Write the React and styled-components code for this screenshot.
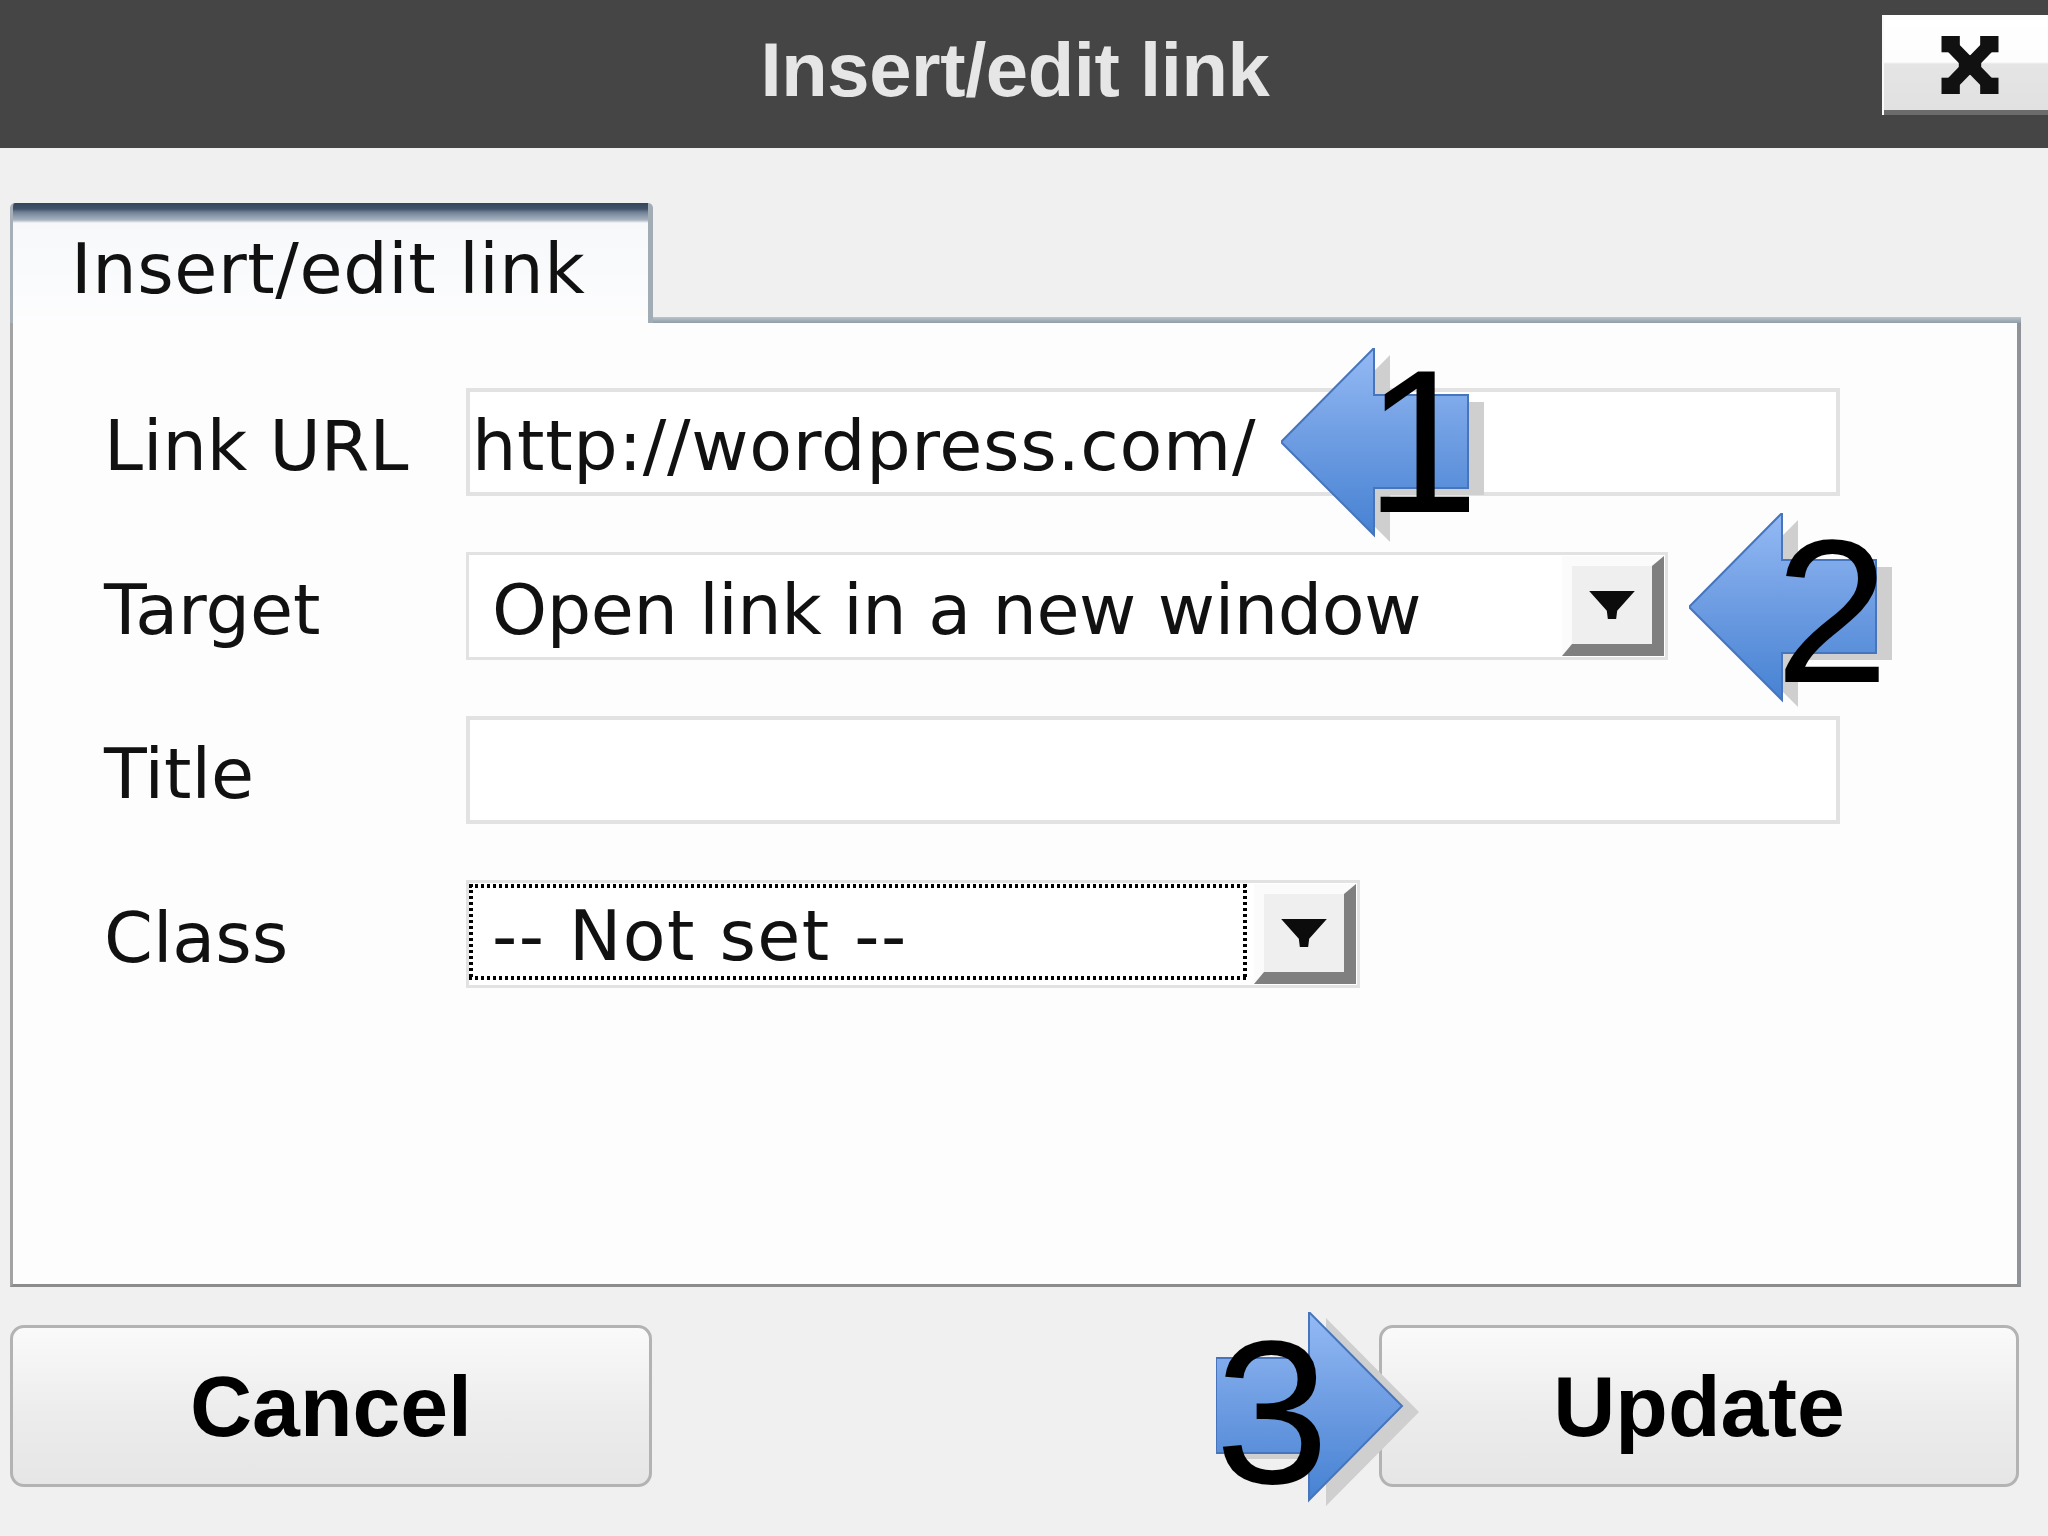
import React from 'react';
import styled, { createGlobalStyle } from 'styled-components';

const GlobalStyle = createGlobalStyle`
  html, body { margin: 0; padding: 0; background: #f0f0f0; }
  body { width: 2048px; height: 1536px; overflow: hidden; }
  *, *::before, *::after { box-sizing: border-box; }
`;

const Window = styled.div`
  position: relative;
  width: 2048px;
  height: 1536px;
  background: #f0f0f0;
  display: flex;
  flex-direction: column;
  font-family: "DejaVu Sans", Verdana, sans-serif;
  color: #111;
`;

const TitleBar = styled.header`
  flex: none;
  height: 148px;
  background: #464546;
  display: grid;
  grid-template-columns: 1fr auto 1fr;
  align-items: center;
`;

const TitleText = styled.h1`
  grid-column: 2;
  margin: 0;
  padding: 0 18px 9px 0;
  font-family: "Liberation Sans", Arial, sans-serif;
  font-weight: 700;
  font-size: 76px;
  line-height: 76px;
  color: #e6e6e6;
  letter-spacing: -0.4px;
`;

const CloseButton = styled.button`
  grid-column: 3;
  justify-self: end;
  align-self: start;
  margin-top: 15px;
  width: 166px;
  height: 100px;
  border: none;
  border-left: 2px solid #fafafa;
  padding: 0 0 0 57px;
  display: flex;
  align-items: center;
  background: linear-gradient(
    to bottom,
    #ffffff 0,
    #fdfdfd 47px,
    #e5e5e5 49px,
    #e1e1e1 95px,
    #6c6c6c 95px,
    #6c6c6c 100%
  );
`;

const Body = styled.main`
  flex: 1;
  display: flex;
  flex-direction: column;
  padding: 55px 27px 0 10px;
`;

const TabRow = styled.div`
  display: flex;
  height: 120px;
`;

const Tab = styled.div`
  width: 643px;
  border-left: 3px solid #a7b0b8;
  border-right: 5px solid #a2acb5;
  border-top-left-radius: 5px;
  border-top-right-radius: 5px;
  background: linear-gradient(
    to bottom,
    #34445a 0,
    #42526a 6px,
    #6d7e92 9px,
    #8c9aab 13px,
    #a7b3bf 17px,
    #f6f8fa 20px,
    #fdfdfe 100%
  );
  padding: 31px 0 0 58px;
  font-size: 70px;
  line-height: 70px;
  letter-spacing: 0.6px;
  white-space: nowrap;
`;

const TabFiller = styled.div`
  flex: 1;
  align-self: flex-end;
  height: 6px;
  background: linear-gradient(to bottom, #b9c4cb, #8f9da8);
`;

const Panel = styled.section`
  flex: none;
  height: 964px;
  background: #fdfdfd;
  border-left: 3px solid #a3a3a3;
  border-right: 4px solid #8f9397;
  border-bottom: 3px solid #8c8c8c;
  padding: 65px 0 0 91px;
  display: grid;
  grid-template-columns: 362px auto;
  grid-auto-rows: 108px;
  row-gap: 56px;
  align-items: center;
  align-content: start;
  justify-content: start;
`;

const FieldLabel = styled.label`
  font-size: 70px;
  line-height: 70px;
  padding-top: 8px;
  white-space: nowrap;
`;

const TextField = styled.div`
  width: ${(p) => p.$width}px;
  height: 108px;
  border: 4px solid #e2e2e2;
  background: #ffffff;
  display: flex;
  align-items: center;
  padding: 8px 0 0 2px;
  font-size: 70px;
  line-height: 70px;
  letter-spacing: 0.7px;
  white-space: nowrap;
  overflow: hidden;
`;

const Select = styled.div`
  width: ${(p) => p.$width}px;
  height: 108px;
  border: 3px solid #e2e2e2;
  background: #ffffff;
  display: flex;
  padding: 1px 0;
`;

const dotted = `
  background-image:
    repeating-linear-gradient(to right, #000 0 3px, transparent 3px 6px),
    repeating-linear-gradient(to right, #000 0 3px, transparent 3px 6px),
    repeating-linear-gradient(to bottom, #000 0 3px, transparent 3px 6px),
    repeating-linear-gradient(to bottom, #000 0 3px, transparent 3px 6px);
  background-size: 100% 4px, 100% 4px, 4px 100%, 4px 100%;
  background-position: 0 0, 0 100%, 0 0, 100% 0;
  background-repeat: no-repeat;
`;

const SelectValue = styled.div`
  flex: 1;
  display: flex;
  align-items: center;
  margin: ${(p) => (p.$focused ? '0 7px 4px 0' : '0')};
  padding: 8px 0 0 23px;
  font-size: 70px;
  line-height: 70px;
  letter-spacing: ${(p) => p.$spacing}px;
  white-space: nowrap;
  overflow: hidden;
  ${(p) => (p.$focused ? dotted : '')}
`;

const DropButton = styled.div`
  flex: none;
  width: 102px;
  margin-right: 1px;
  background: #efefef;
  border-style: solid;
  border-width: 10px 12px 12px 10px;
  border-color: #fbfbfb #7f7f7f #7f7f7f #fbfbfb;
  display: flex;
  align-items: center;
  justify-content: center;
`;

const Footer = styled.footer`
  display: flex;
  justify-content: space-between;
  margin-top: 38px;
  padding-right: 2px;
`;

const DialogButton = styled.button`
  width: ${(p) => p.$width}px;
  height: 162px;
  border: 3px solid #b3b3b3;
  border-radius: 14px;
  background: linear-gradient(to bottom, #fafafa, #ececec 55%, #e6e6e6);
  font-family: "Liberation Sans", Arial, sans-serif;
  font-weight: 700;
  font-size: 86px;
  line-height: 86px;
  color: #000;
  display: flex;
  align-items: center;
  justify-content: center;
  padding: 0;
`;

const Annotation = styled.div`
  position: absolute;
  left: ${(p) => p.$x}px;
  top: ${(p) => p.$y}px;
  width: 210px;
  height: 200px;
  pointer-events: none;
`;

const ArrowSvg = styled.svg`
  display: block;
`;

const StepNumber = styled.span`
  position: absolute;
  left: ${(p) => p.$x}px;
  top: ${(p) => p.$y}px;
  font-family: "Liberation Sans", Arial, sans-serif;
  font-size: 205px;
  line-height: 205px;
  color: #000;
`;

const LEFT_ARROW = '0,94 93,0 93,47 187,47 187,140 93,140 93,187';
const RIGHT_ARROW = '0,46 93,46 93,0 186,94 93,188 93,141 0,141';

function Arrow({ id, dir }) {
  const pts = dir === 'left' ? LEFT_ARROW : RIGHT_ARROW;
  const dx = dir === 'left' ? 16 : 17;
  const dy = dir === 'left' ? 7 : 6;
  return (
    <ArrowSvg width="210" height="200" viewBox="0 0 210 200">
      <defs>
        <linearGradient id={id} x1="0" y1="0" x2="0" y2="1">
          <stop offset="0" stopColor="#94baf4" />
          <stop offset="0.5" stopColor="#6d9ce2" />
          <stop offset="1" stopColor="#4682d2" />
        </linearGradient>
      </defs>
      <polygon points={pts} fill="#cfcfcf" transform={`translate(${dx} ${dy})`} />
      <polygon points={pts} fill={`url(#${id})`} stroke="#4675bd" strokeWidth="2" />
    </ArrowSvg>
  );
}

function CloseIcon() {
  return (
    <svg width="58" height="58" viewBox="0 0 56 57">
      <g fill="#111">
        <rect x="0" y="0" width="18" height="16" />
        <rect x="38" y="0" width="18" height="16" />
        <rect x="0" y="41" width="18" height="16" />
        <rect x="38" y="41" width="18" height="16" />
        <rect x="17" y="19" width="22" height="19" />
      </g>
      <path d="M8 8 L48 49 M48 8 L8 49" stroke="#111" strokeWidth="13" />
    </svg>
  );
}

function DropArrow() {
  return (
    <svg width="46" height="28" viewBox="0 0 44 27">
      <polygon points="0,0 44,0 27,19 26,27 18,27 17,19" fill="#0c0c0c" />
    </svg>
  );
}

export default function App() {
  return (
    <>
      <GlobalStyle />
      <Window>
        <TitleBar>
          <TitleText>Insert/edit link</TitleText>
          <CloseButton aria-label="Close">
            <CloseIcon />
          </CloseButton>
        </TitleBar>
        <Body>
          <TabRow>
            <Tab>Insert/edit link</Tab>
            <TabFiller />
          </TabRow>
          <Panel>
            <FieldLabel>Link URL</FieldLabel>
            <TextField $width={1374}>http://wordpress.com/</TextField>

            <FieldLabel>Target</FieldLabel>
            <Select $width={1202}>
              <SelectValue $spacing={-0.4}>Open link in a new window</SelectValue>
              <DropButton>
                <DropArrow />
              </DropButton>
            </Select>

            <FieldLabel>Title</FieldLabel>
            <TextField $width={1374} />

            <FieldLabel>Class</FieldLabel>
            <Select $width={894}>
              <SelectValue $focused $spacing={1.4}>-- Not set --</SelectValue>
              <DropButton>
                <DropArrow />
              </DropButton>
            </Select>
          </Panel>
          <Footer>
            <DialogButton $width={642}>Cancel</DialogButton>
            <DialogButton $width={640}>Update</DialogButton>
          </Footer>
        </Body>

        <Annotation $x={1281} $y={348}>
          <Arrow id="arrow-grad-1" dir="left" />
          <StepNumber $x={84} $y={-10}>1</StepNumber>
        </Annotation>
        <Annotation $x={1689} $y={513}>
          <Arrow id="arrow-grad-2" dir="left" />
          <StepNumber $x={86} $y={-5}>2</StepNumber>
        </Annotation>
        <Annotation $x={1216} $y={1312}>
          <Arrow id="arrow-grad-3" dir="right" />
          <StepNumber $x={-1} $y={-3}>3</StepNumber>
        </Annotation>
      </Window>
    </>
  );
}
